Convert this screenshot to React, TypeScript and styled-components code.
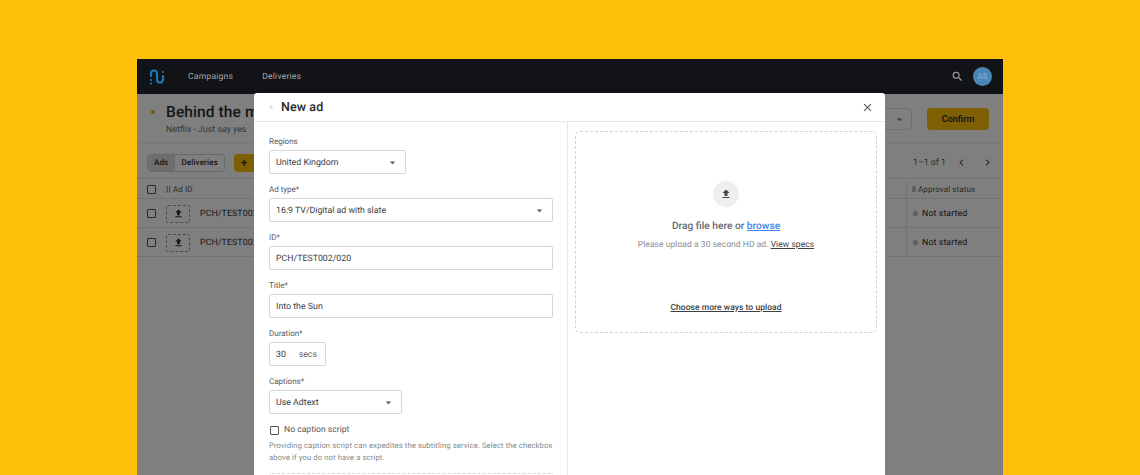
import React from "react";
import styled, { createGlobalStyle } from "styled-components";
import {
  MdArrowDropDown,
  MdChevronLeft,
  MdChevronRight,
  MdClose,
  MdDragIndicator,
  MdFileUpload,
  MdSearch,
} from "react-icons/md";

const FONT = `Roboto, "Liberation Sans", sans-serif`;

const GlobalStyle = createGlobalStyle`
  html, body {
    margin: 0;
    height: 475px;
    overflow: hidden;
    background: #fdbf08;
    font-family: ${FONT};
    color: #2b2d31;
    text-rendering: geometricPrecision;
  }
  * { box-sizing: border-box; }
`;

const Stage = styled.div`
  height: 475px;
  padding: 59px 137px 0;
`;

const Frame = styled.div`
  position: relative;
  width: 866px;
  height: 416px;
  overflow: hidden;
  background: #fff;
  display: flex;
  flex-direction: column;
`;

const Nav = styled.nav`
  height: 35px;
  flex: none;
  background: #111316;
  display: flex;
  align-items: center;
  padding: 0 11px 0 12px;
`;

const Logo = styled.svg`
  width: 18px;
  height: 18px;
  margin-right: 21px;
`;

const NavLink = styled.a`
  font-size: 8.6px;
  letter-spacing: 0.2px;
  margin-right: 29px;
  color: #a8a8a8;
`;

const NavRight = styled.div`
  margin-left: auto;
  display: flex;
  align-items: center;
  gap: 9px;
  color: #a8a8a8;
`;

const Avatar = styled.div`
  width: 19px;
  height: 19px;
  border-radius: 50%;
  background: #4a86b5;
  color: #8fb6d3;
  font-size: 8px;
  display: flex;
  align-items: center;
  justify-content: center;
`;

const PageHead = styled.header`
  height: 49px;
  flex: none;
  display: flex;
  align-items: flex-start;
  padding: 9px 14px 0 14px;
`;

const StatusDot = styled.span`
  width: 4px;
  height: 4px;
  margin-top: 7px;
  margin-right: 11px;
  border-radius: 50%;
  background: #f5a623;
`;

const PageTitle = styled.h1`
  margin: 0;
  font-size: 15.5px;
  line-height: 19px;
  font-weight: 500;
  letter-spacing: 0.1px;
  white-space: nowrap;
`;

const PageSub = styled.div`
  margin-top: 2px;
  font-size: 8.8px;
  line-height: 12px;
  color: #6b6f76;
`;

const HeadActions = styled.div`
  margin-left: auto;
  margin-top: 5px;
  display: flex;
  gap: 15px;
`;

const GhostSelect = styled.div`
  width: 40px;
  height: 22px;
  border: 1px solid #e0e0e0;
  border-radius: 4px;
  display: flex;
  align-items: center;
  justify-content: flex-end;
  padding-right: 5px;
  color: #777;
`;

const Confirm = styled.button`
  width: 62px;
  height: 22px;
  border: 0;
  border-radius: 4px;
  background: #fdbf08;
  font: 600 9px ${FONT};
  color: #2b2d31;
  padding: 0;
`;

const Toolbar = styled.div`
  height: 36px;
  flex: none;
  display: flex;
  align-items: center;
  padding: 3px 9px 0 10px;
  border-bottom: 1px solid #e3e3e3;
  border-top: 1px solid #f0f0f0;
`;

const Tabs = styled.div`
  display: flex;
  height: 18px;
  border: 1px solid #d2d2d2;
  border-radius: 4px;
  overflow: hidden;
`;

const Tab = styled.div<{ $active?: boolean }>`
  padding: 0 6px;
  font-size: 8px;
  font-weight: 500;
  line-height: 16px;
  letter-spacing: 0.15px;
  background: ${(p) => (p.$active ? "#dcdcdc" : "#fff")};
  border-right: ${(p) => (p.$active ? "1px solid #d2d2d2" : "0")};
`;

const AddButton = styled.button`
  margin-left: 9px;
  width: 40px;
  height: 18px;
  border: 0;
  border-radius: 4px;
  background: #fdbf08;
  padding: 0 0 0 7px;
  font: 600 11px ${FONT};
  text-align: left;
  color: #2b2d31;
`;

const Pager = styled.div`
  margin-left: auto;
  display: flex;
  align-items: center;
  font-size: 8.8px;
  color: #555;
`;

const PagerArrow = styled.span<{ $gap: number }>`
  display: flex;
  margin-left: ${(p) => p.$gap}px;
`;

const Row = styled.div<{ $head?: boolean }>`
  height: ${(p) => (p.$head ? "20px" : "29px")};
  flex: none;
  display: flex;
  align-items: center;
  padding-top: 1px;
  border-bottom: 1px solid #e6e6e6;
  font-size: ${(p) => (p.$head ? "8px" : "8.8px")};
  letter-spacing: 0.1px;
  color: ${(p) => (p.$head ? "#555" : "#2b2d31")};
`;

const Cell = styled.div<{ $gap: number }>`
  display: flex;
  align-items: center;
  gap: ${(p) => p.$gap}px;
  padding-left: 10px;
`;

const LastCell = styled.div`
  margin-left: auto;
  width: 97px;
  height: 100%;
  display: flex;
  align-items: center;
  padding-left: 3px;
  border-left: 1px solid #e6e6e6;
`;

const Grey = styled.span`
  width: 5px;
  height: 5px;
  margin: 0 4px 0 3px;
  border-radius: 50%;
  background: #bdbdbd;
`;

const Box = styled.span`
  display: inline-block;
  width: 9px;
  height: 9px;
  flex: none;
  border: 1px solid #555;
  border-radius: 1px;
`;

const Thumb = styled.span`
  width: 24px;
  height: 18px;
  border: 1px dashed #999;
  border-radius: 2px;
  display: flex;
  align-items: center;
  justify-content: center;
`;

const Overlay = styled.div`
  position: absolute;
  inset: 35px 0 0 0;
  background: rgba(0, 0, 0, 0.5);
`;

const Modal = styled.section`
  position: absolute;
  left: 117px;
  top: 34px;
  width: 631px;
  height: 400px;
  background: #fff;
  border-radius: 3px 3px 0 0;
  display: flex;
  flex-direction: column;
`;

const ModalHead = styled.header`
  height: 29px;
  flex: none;
  border-bottom: 1px solid #e8e8e8;
  display: flex;
  align-items: center;
  padding: 0 11px 0 15px;
`;

const FaintDot = styled.span`
  width: 4px;
  height: 4px;
  border-radius: 50%;
  background: #e4e4e4;
  margin-right: 8px;
`;

const ModalTitle = styled.h2`
  margin: 1px 0 0;
  font-size: 12.5px;
  font-weight: 500;
  letter-spacing: 0.1px;
  color: #26282c;
`;

const CloseButton = styled.span`
  margin-left: auto;
  display: flex;
  color: #555;
`;

const ModalBody = styled.div`
  flex: 1;
  display: flex;
  min-height: 0;
`;

const FormPane = styled.div`
  width: 314px;
  flex: none;
  border-right: 1px solid #e8e8e8;
  padding: 15px 14px 0 15px;
  display: flex;
  flex-direction: column;
  overflow: hidden;
`;

const Label = styled.label`
  display: block;
  height: 13px;
  flex: none;
  font-size: 8px;
  line-height: 9px;
  color: #55585e;
`;

const Field = styled.div<{ $width?: number }>`
  width: ${(p) => (p.$width ? `${p.$width}px` : "100%")};
  height: 24px;
  flex: none;
  margin-bottom: 11px;
  border: 1px solid #d6d6d6;
  border-bottom-width: 1.5px;
  border-radius: 2px;
  display: flex;
  align-items: center;
  justify-content: space-between;
  padding: 1px 6px 0;
  font-size: 8.8px;
  color: #3a3c40;
`;

const Secs = styled.span`
  margin-right: 2px;
  color: #666;
`;

const CheckRow = styled.div`
  display: flex;
  align-items: center;
  flex: none;
  gap: 5px;
  padding-left: 1px;
  margin-top: -2px;
  font-size: 8.6px;
  color: #55585e;
  height: 14px;
`;

const Help = styled.p`
  margin: 3px 0 0;
  flex: none;
  font-size: 7.7px;
  line-height: 12px;
  letter-spacing: 0.1px;
  color: #85888e;
`;

const Script = styled.div`
  margin-top: 9px;
  height: 60px;
  flex: none;
  border: 1px dashed #d6d6d6;
  border-radius: 3px;
`;

const UploadPane = styled.div`
  flex: 1;
  padding: 9px 8px 0 7px;
`;

const DropZone = styled.div`
  width: 302px;
  height: 202px;
  border: 1px dashed #d2d2d2;
  border-radius: 5px;
  display: flex;
  flex-direction: column;
  align-items: center;
  padding-top: 49px;
`;

const UploadCircle = styled.span`
  width: 26px;
  height: 26px;
  border-radius: 50%;
  background: #eee;
  display: flex;
  align-items: center;
  justify-content: center;
  color: #444;
`;

const DragText = styled.div`
  margin-top: 13px;
  font-size: 10.2px;
  line-height: 14px;
  font-weight: 500;
  color: #66696e;
`;

const Browse = styled.a`
  color: #3b86f0;
  text-decoration: underline;
`;

const Specs = styled.div`
  margin-top: 5px;
  font-size: 8.5px;
  line-height: 13px;
  letter-spacing: 0.05px;
  color: #8a8d92;
`;

const DarkLink = styled.a`
  color: #3c3e42;
  text-decoration: underline;
`;

const More = styled(DarkLink)`
  margin-top: 50px;
  font-size: 8.5px;
  line-height: 13px;
  font-weight: 500;
  letter-spacing: 0.05px;
`;

const rows = ["PCH/TEST002/020", "PCH/TEST002/021"];

const Select = ({ value, width }: { value: string; width?: number }) => (
  <Field $width={width}>
    {value}
    <MdArrowDropDown size={13} color="#555" />
  </Field>
);

const App: React.FC = () => {
  return (
    <Stage>
      <GlobalStyle />
      <Frame>
        <Nav>
          <Logo viewBox="0 0 18 18" fill="none">
            <path
              d="M2 8V5.5a3 3 0 0 1 6 0v6a3 3 0 0 0 6 0V8"
              stroke="#1e78b0"
              strokeWidth="2.2"
              strokeLinecap="round"
            />
            <circle cx="2" cy="12" r="1.1" fill="#1e78b0" />
            <circle cx="2" cy="15.5" r="1.1" fill="#1e78b0" />
            <circle cx="14" cy="4" r="1.1" fill="#1e78b0" />
          </Logo>
          <NavLink>Campaigns</NavLink>
          <NavLink>Deliveries</NavLink>
          <NavRight>
            <MdSearch size={13} />
            <Avatar>AS</Avatar>
          </NavRight>
        </Nav>
        <PageHead>
          <StatusDot />
          <div>
            <PageTitle>Behind the mirror</PageTitle>
            <PageSub>Netflix - Just say yes</PageSub>
          </div>
          <HeadActions>
            <GhostSelect>
              <MdArrowDropDown size={13} />
            </GhostSelect>
            <Confirm>Confirm</Confirm>
          </HeadActions>
        </PageHead>
        <Toolbar>
          <Tabs>
            <Tab $active>Ads</Tab>
            <Tab>Deliveries</Tab>
          </Tabs>
          <AddButton>+</AddButton>
          <Pager>
            1–1 of 1
            <PagerArrow $gap={9}>
              <MdChevronLeft size={13} />
            </PagerArrow>
            <PagerArrow $gap={13}>
              <MdChevronRight size={13} />
            </PagerArrow>
          </Pager>
        </Toolbar>
        <Row $head>
          <Cell $gap={8}>
            <Box />
            <MdDragIndicator size={9} />
          </Cell>
          Ad ID
          <LastCell>
            <MdDragIndicator size={8} />
            Approval status
          </LastCell>
        </Row>
        {rows.map((id) => (
          <Row key={id}>
            <Cell $gap={10}>
              <Box />
              <Thumb>
                <MdFileUpload size={11} />
              </Thumb>
              {id}
            </Cell>
            <LastCell>
              <Grey />
              Not started
            </LastCell>
          </Row>
        ))}
        <Overlay />
        <Modal>
          <ModalHead>
            <FaintDot />
            <ModalTitle>New ad</ModalTitle>
            <CloseButton>
              <MdClose size={13} />
            </CloseButton>
          </ModalHead>
          <ModalBody>
            <FormPane>
              <Label>Regions</Label>
              <Select value="United Kingdom" width={137} />
              <Label>Ad type*</Label>
              <Select value="16:9 TV/Digital ad with slate" />
              <Label>ID*</Label>
              <Field>PCH/TEST002/020</Field>
              <Label>Title*</Label>
              <Field>Into the Sun</Field>
              <Label>Duration*</Label>
              <Field $width={57}>
                30
                <Secs>secs</Secs>
              </Field>
              <Label>Captions*</Label>
              <Select value="Use Adtext" width={133} />
              <CheckRow>
                <Box />
                No caption script
              </CheckRow>
              <Help>
                Providing caption script can expedites the subtitling service. Select the checkbox
                above if you do not have a script.
              </Help>
              <Script />
            </FormPane>
            <UploadPane>
              <DropZone>
                <UploadCircle>
                  <MdFileUpload size={12} />
                </UploadCircle>
                <DragText>
                  Drag file here or <Browse>browse</Browse>
                </DragText>
                <Specs>
                  Please upload a 30 second HD ad. <DarkLink>View specs</DarkLink>
                </Specs>
                <More>Choose more ways to upload</More>
              </DropZone>
            </UploadPane>
          </ModalBody>
        </Modal>
      </Frame>
    </Stage>
  );
};

export default App;
